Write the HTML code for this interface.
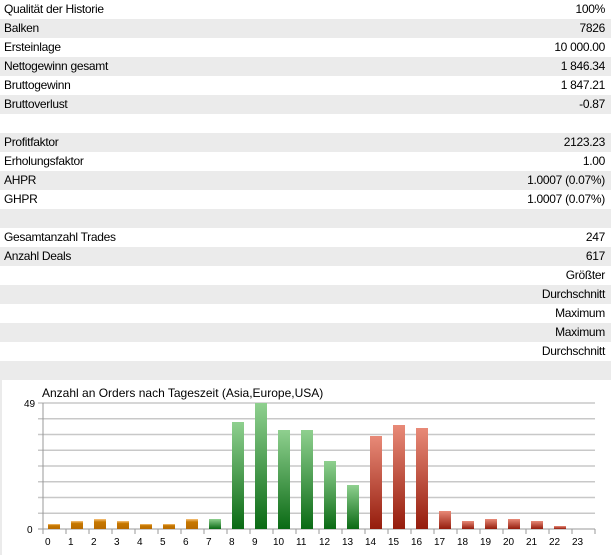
<!DOCTYPE html>
<html><head><meta charset="utf-8"><style>
body{margin:0;width:611px;height:555px;overflow:hidden;background:#fff;font-family:"Liberation Sans",sans-serif;font-size:12px;color:#000}
.r{height:19px;line-height:19px;display:flex;justify-content:space-between;padding:0 6px 0 4px;letter-spacing:-0.3px}
.g{background:#ebebeb}
#c{position:absolute;left:0;top:380px;width:611px;height:175px;background:#fff;border-left:2px solid #ebebeb;box-sizing:border-box}
</style></head><body>
<div class="r"><span>Qualität der Historie</span><span>100%</span></div>
<div class="r g"><span>Balken</span><span>7826</span></div>
<div class="r"><span>Ersteinlage</span><span>10 000.00</span></div>
<div class="r g"><span>Nettogewinn gesamt</span><span>1 846.34</span></div>
<div class="r"><span>Bruttogewinn</span><span>1 847.21</span></div>
<div class="r g"><span>Bruttoverlust</span><span>-0.87</span></div>
<div class="r"><span></span><span></span></div>
<div class="r g"><span>Profitfaktor</span><span>2123.23</span></div>
<div class="r"><span>Erholungsfaktor</span><span>1.00</span></div>
<div class="r g"><span>AHPR</span><span>1.0007 (0.07%)</span></div>
<div class="r"><span>GHPR</span><span>1.0007 (0.07%)</span></div>
<div class="r g"><span></span><span></span></div>
<div class="r"><span>Gesamtanzahl Trades</span><span>247</span></div>
<div class="r g"><span>Anzahl Deals</span><span>617</span></div>
<div class="r"><span></span><span>Größter</span></div>
<div class="r g"><span></span><span>Durchschnitt</span></div>
<div class="r"><span></span><span>Maximum</span></div>
<div class="r g"><span></span><span>Maximum</span></div>
<div class="r"><span></span><span>Durchschnitt</span></div>
<div class="r g"><span></span><span></span></div>
<svg style="position:absolute;left:0;top:0" width="611" height="555" xmlns="http://www.w3.org/2000/svg">
<defs>
<linearGradient id="o" x1="0" y1="0" x2="0" y2="1"><stop offset="0" stop-color="#f7c27a"/><stop offset="0.3" stop-color="#c77800"/><stop offset="1" stop-color="#b86a00"/></linearGradient>
<linearGradient id="gr" x1="0" y1="0" x2="0" y2="1"><stop offset="0" stop-color="#8fd08f"/><stop offset="1" stop-color="#0a6a14"/></linearGradient>
<linearGradient id="re" x1="0" y1="0" x2="0" y2="1"><stop offset="0" stop-color="#e88a78"/><stop offset="1" stop-color="#951c0c"/></linearGradient>
</defs>
<rect x="0" y="380" width="2" height="175" fill="#ebebeb"/>
<text x="42" y="397" font-size="12" font-family="Liberation Sans, sans-serif">Anzahl an Orders nach Tageszeit (Asia,Europe,USA)</text>
<text x="24" y="407" font-size="10" font-family="Liberation Sans, sans-serif">49</text>
<text x="27" y="533" font-size="10" font-family="Liberation Sans, sans-serif">0</text>
<g stroke="#c8c8c8" stroke-width="1.5">
<line x1="38" y1="403" x2="595" y2="403"/><line x1="38" y1="418.75" x2="595" y2="418.75"/><line x1="38" y1="434.5" x2="595" y2="434.5"/><line x1="38" y1="450.25" x2="595" y2="450.25"/><line x1="38" y1="466" x2="595" y2="466"/><line x1="38" y1="481.75" x2="595" y2="481.75"/><line x1="38" y1="497.5" x2="595" y2="497.5"/><line x1="38" y1="513.25" x2="595" y2="513.25"/>
</g>
<line x1="43" y1="403" x2="43" y2="534" stroke="#999"/>
<line x1="38" y1="529" x2="595" y2="529" stroke="#999"/>
<g id="bars"></g>
<g id="lab" font-size="10" font-family="Liberation Sans, sans-serif" fill="#000"></g>
</svg>
<script>
var h=[5,8,10,8,5,5,10,10,107,126,99,99,68,44,93,104,101,18,8,10,10,8,3,0];
var b=document.getElementById('bars'),l=document.getElementById('lab'),ns="http://www.w3.org/2000/svg";
for(var i=0;i<24;i++){var x0=43+23*i;
var t=document.createElementNS(ns,'line');t.setAttribute('x1',x0+23);t.setAttribute('x2',x0+23);t.setAttribute('y1',529);t.setAttribute('y2',534);t.setAttribute('stroke','#999');b.appendChild(t);
if(h[i]>0){var r=document.createElementNS(ns,'rect');r.setAttribute('x',x0+5);r.setAttribute('y',529-h[i]);r.setAttribute('width',12);r.setAttribute('height',h[i]);
r.setAttribute('fill',i<7?'url(#o)':i<14?'url(#gr)':'url(#re)');b.appendChild(r);}
var s=document.createElementNS(ns,'text');s.setAttribute('x',x0+(i<10?2:0));s.setAttribute('y',545);s.textContent=i;l.appendChild(s);}
</script>
</body></html>
